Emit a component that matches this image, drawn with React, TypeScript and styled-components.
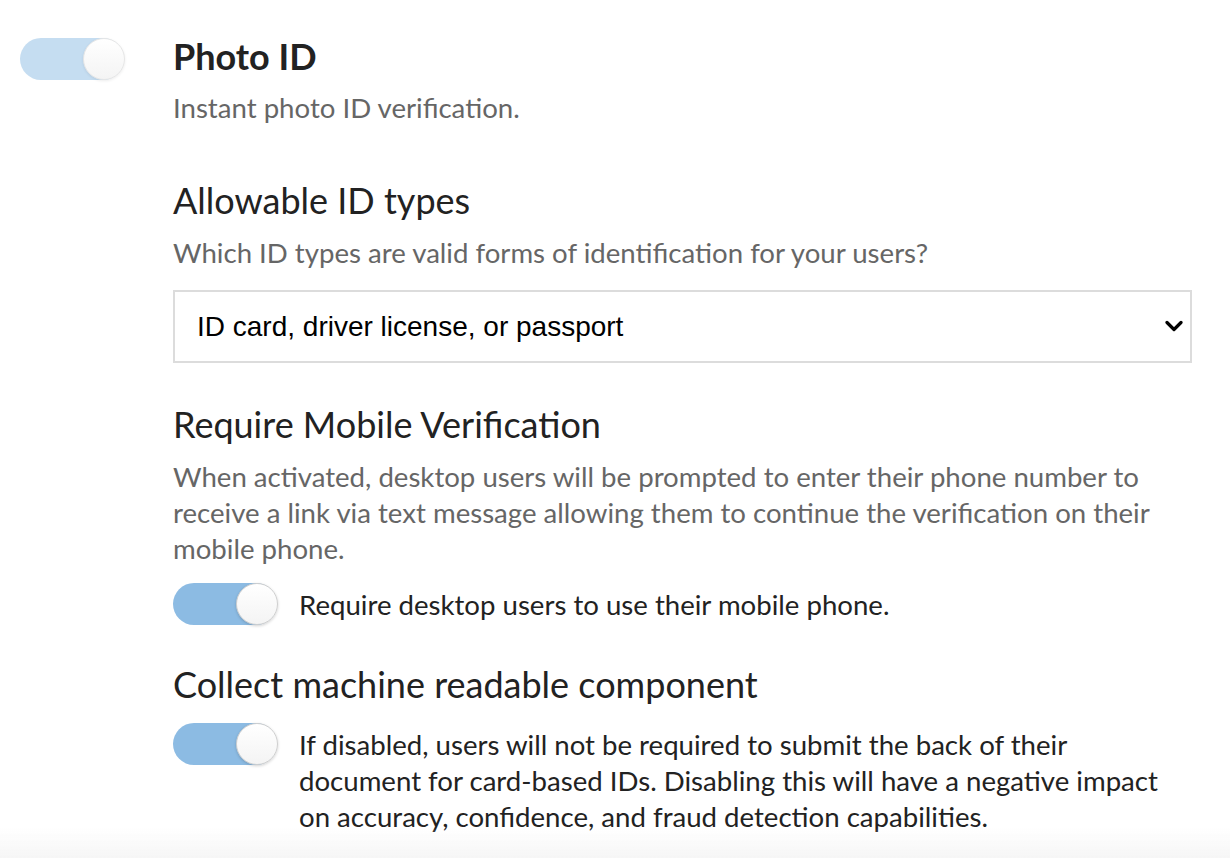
import React from "react";
import styled, { createGlobalStyle } from "styled-components";

const Global = createGlobalStyle`
  html, body { margin: 0; padding: 0; background: #ffffff; }
  body { font-family: Lato, "Noto Sans", sans-serif; color: #222; -webkit-font-smoothing: antialiased; }
`;

const Page = styled.div`
  display: flex;
  align-items: flex-start;
  padding: 36px 0 0 20px;
  min-height: 858px;
  box-sizing: border-box;
`;

const Side = styled.div`
  width: 153px;
  flex: none;
  padding-top: 2px;
`;

const Main = styled.div`
  width: 1019px;
  display: flex;
  flex-direction: column;
`;

const Track = styled.div<{ $tone: "pale" | "on" }>`
  position: relative;
  width: 104px;
  height: 42px;
  border-radius: 21px;
  flex: none;
  background: ${(p) => (p.$tone === "pale" ? "#c5ddf1" : "#8cbbe3")};
`;

const Knob = styled.div<{ $tone: "pale" | "on" }>`
  position: absolute;
  right: -1px;
  top: 0;
  width: 40px;
  height: 40px;
  border-radius: 50%;
  background: linear-gradient(180deg, #ffffff 0%, #f4f4f4 100%);
  border: 1px solid ${(p) => (p.$tone === "pale" ? "#e6e6e6" : "#cfcfcf")};
  box-shadow: 0 1px 3px rgba(0, 0, 0, ${(p) => (p.$tone === "pale" ? 0.08 : 0.18)});
`;

const Toggle = ({ tone }: { tone: "pale" | "on" }) => (
  <Track $tone={tone}>
    <Knob $tone={tone} />
  </Track>
);

const Title = styled.h2<{ $bold?: boolean; $mt?: number }>`
  margin: ${(p) => p.$mt ?? 0}px 0 0;
  font-size: 36px;
  line-height: 40px;
  font-weight: ${(p) => (p.$bold ? 700 : 400)};
  color: #222;
`;

const Desc = styled.p<{ $mt: number }>`
  margin: ${(p) => p.$mt}px 0 0;
  font-size: 27.6px;
  line-height: 36px;
  color: #666;
`;

const SelectWrap = styled.div`
  position: relative;
  margin-top: 19px;
  height: 73px;
`;

const Select = styled.select`
  appearance: none;
  -webkit-appearance: none;
  width: 100%;
  height: 100%;
  box-sizing: border-box;
  border: 2px solid #dcdcdc;
  border-radius: 0;
  background: #fff;
  padding: 0 60px 0 22px;
  font-family: "Liberation Sans", Arial, sans-serif;
  font-size: 28px;
  color: #000;
  outline: none;
`;

const Chevron = styled.svg`
  position: absolute;
  right: 9px;
  top: 30px;
  width: 18px;
  height: 12px;
  pointer-events: none;
`;

const OptionRow = styled.div<{ $mt: number; $align: "center" | "flex-start" }>`
  display: flex;
  align-items: ${(p) => p.$align};
  gap: 22px;
  margin-top: ${(p) => p.$mt}px;
`;

const OptionText = styled.div<{ $mt?: number }>`
  font-size: 27.6px;
  line-height: 36px;
  color: #222;
  margin-top: ${(p) => p.$mt ?? 0}px;
  flex: 1;
`;

const BottomFade = styled.div`
  position: fixed;
  left: 0;
  right: 0;
  bottom: 0;
  height: 30px;
  background: linear-gradient(180deg, rgba(245, 245, 245, 0) 0%, rgba(245, 245, 245, 0.9) 100%);
  pointer-events: none;
`;

export default function App() {
  return (
    <>
      <Global />
      <Page>
        <Side>
          <Toggle tone="pale" />
        </Side>
        <Main>
          <Title $bold>Photo ID</Title>
          <Desc $mt={14}>Instant photo ID verification.</Desc>

          <Title $mt={54}>Allowable ID types</Title>
          <Desc $mt={15}>Which ID types are valid forms of identification for your users?</Desc>
          <SelectWrap>
            <Select defaultValue="any">
              <option value="any">ID card, driver license, or passport</option>
              <option value="id">ID card</option>
              <option value="dl">Driver license</option>
              <option value="pp">Passport</option>
            </Select>
            <Chevron viewBox="0 0 18 12">
              <path d="M2 2.5 L9 9.5 L16 2.5" fill="none" stroke="#000" strokeWidth="3.2" strokeLinecap="round" strokeLinejoin="round" />
            </Chevron>
          </SelectWrap>

          <Title $mt={41}>Require Mobile Verification</Title>
          <Desc $mt={15}>
            When activated, desktop users will be prompted to enter their phone number to receive a link via text
            message allowing them to continue the verification on their mobile phone.
          </Desc>
          <OptionRow $mt={16} $align="center">
            <Toggle tone="on" />
            <OptionText $mt={2}>Require desktop users to use their mobile phone.</OptionText>
          </OptionRow>

          <Title $mt={39}>Collect machine readable component</Title>
          <OptionRow $mt={19} $align="flex-start">
            <Toggle tone="on" />
            <OptionText $mt={4}>
              If disabled, users will not be required to submit the back of their document for card-based IDs.
              Disabling this will have a negative impact on accuracy, confidence, and fraud detection capabilities.
            </OptionText>
          </OptionRow>
        </Main>
      </Page>
      <BottomFade />
    </>
  );
}
